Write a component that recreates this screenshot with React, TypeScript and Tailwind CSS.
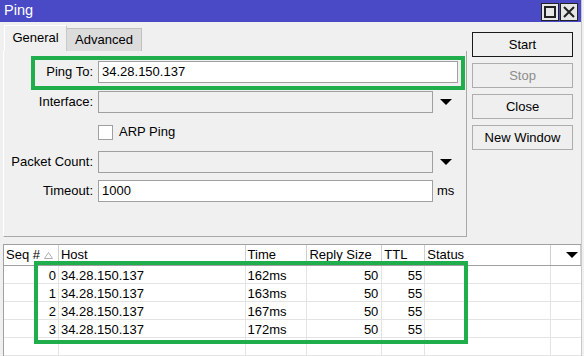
import { ReactNode } from "react";

const rows = [
  { seq: 0, host: "34.28.150.137", time: "162ms", size: 50, ttl: 55 },
  { seq: 1, host: "34.28.150.137", time: "163ms", size: 50, ttl: 55 },
  { seq: 2, host: "34.28.150.137", time: "167ms", size: 50, ttl: 55 },
  { seq: 3, host: "34.28.150.137", time: "172ms", size: 50, ttl: 55 },
];

// column widths (px)
const cols = [55, 187, 62, 75, 43, 126, 30];

function Caret() {
  return (
    <svg width="12" height="7" viewBox="0 0 12 7" className="shrink-0">
      <path d="M0 0 H12 L6 6 Z" fill="#000" />
    </svg>
  );
}

function Row({ label, children }: { label: string; children: ReactNode }) {
  return (
    <div className="flex h-[22px] items-center">
      <div className="w-[90px] pr-[1px] text-right whitespace-nowrap">{label}</div>
      <div className="ml-[4px] flex flex-1 items-center">{children}</div>
    </div>
  );
}

function Btn({ children, primary, disabled }: { children: ReactNode; primary?: boolean; disabled?: boolean }) {
  return (
    <div
      className={[
        "flex h-[25px] w-[101px] items-center justify-center bg-[#efefef] border",
        primary ? "border-[#1a1a1a]" : "border-[#adadad]",
        disabled ? "text-[#8c8c8c]" : "text-black",
      ].join(" ")}
    >
      {children}
    </div>
  );
}

export default function App() {
  return (
    <div
      className="relative h-[356px] w-[584px] overflow-hidden bg-[#f0f0f0] text-[13px] text-black"
      style={{ fontFamily: "'Liberation Sans', Arial, sans-serif" }}
    >
      <div className="flex h-full w-[582px] flex-col border-r border-[#c8c8c8]">
        {/* title bar */}
        <div className="flex h-[23px] items-center justify-between bg-[#4a4ac7] pl-[4px] pr-[3px]">
          <span className="text-[14.5px] text-white">Ping</span>
          <div className="flex gap-[1px] pt-[1px]">
            <div className="flex h-[18px] w-[18px] items-center justify-center border border-[#222] bg-[#e6e6e6]">
              <div className="h-[12px] w-[12px] border-2 border-[#222]" />
            </div>
            <div className="flex h-[18px] w-[18px] items-center justify-center border border-[#222] bg-[#e6e6e6]">
              <svg width="12" height="12" viewBox="0 0 12 12">
                <path d="M1 1 L11 11 M11 1 L1 11" stroke="#222" strokeWidth="2" />
              </svg>
            </div>
          </div>
        </div>

        <div className="flex">
          {/* left side */}
          <div className="w-[467px] pl-[3px]">
            <div className="flex h-[29px] items-end pl-[1px]">
              <div className="flex h-[26px] w-[63px] items-center justify-center border-l border-t border-r border-white border-r-[#c8c8c8] bg-[#f0f0f0] pb-[2px]">
                General
              </div>
              <div className="flex h-[23px] w-[75px] items-center justify-center border-t border-r border-[#c0c0c0] bg-[#dcdcdc]">
                Advanced
              </div>
            </div>
            <div className="flex h-[186px] flex-col gap-[8px] border-l border-white border-r border-b border-r-[#a8a8a8] border-b-[#a8a8a8] pt-[10px]">
              <Row label="Ping To:">
                <div className="flex h-[22px] w-[360px] items-center border border-[#a0a0a0] bg-white pl-[3px]">
                  34.28.150.137
                </div>
              </Row>
              <Row label="Interface:">
                <div className="h-[22px] w-[335px] border border-[#a0a0a0] bg-[#f0f0f0]" />
                <div className="ml-[7px]">
                  <Caret />
                </div>
              </Row>
              <div className="flex h-[22px] items-center pl-[94px]">
                <div className="h-[15px] w-[15px] border border-[#a0a0a0] bg-white" />
                <span className="ml-[6px]">ARP Ping</span>
              </div>
              <Row label="Packet Count:">
                <div className="h-[22px] w-[335px] border border-[#a0a0a0] bg-[#f0f0f0]" />
                <div className="ml-[7px]">
                  <Caret />
                </div>
              </Row>
              <div className="-mt-[1px]">
                <Row label="Timeout:">
                  <div className="flex h-[22px] w-[335px] items-center border border-[#a0a0a0] bg-white pl-[3px]">
                    1000
                  </div>
                  <span className="ml-[4px]">ms</span>
                </Row>
              </div>
            </div>
          </div>

          {/* right buttons */}
          <div className="ml-[5px] flex flex-col gap-[6px] pt-[10px]">
            <Btn primary>Start</Btn>
            <Btn disabled>Stop</Btn>
            <Btn>Close</Btn>
            <Btn>New Window</Btn>
          </div>
        </div>

        {/* table */}
        <div className="ml-[3px] mt-[7px] flex-1 border-l border-t border-[#a0a0a0] bg-white">
          <div className="flex h-[21px] border-b border-[#a0a0a0]">
            {["Seq #", "Host", "Time", "Reply Size", "TTL", "Status", ""].map((h, i) => (
              <div
                key={i}
                className="flex items-center border-r border-[#d0d0d0] pl-[2px] whitespace-nowrap"
                style={{ width: cols[i] }}
              >
                {h}
                {i === 0 && (
                  <svg width="9" height="7" viewBox="0 0 9 7" className="ml-[4px]">
                    <path d="M0.5 6.5 L4.5 0.5 L8.5 6.5 Z" fill="none" stroke="#b0b0b0" />
                  </svg>
                )}
                {i === 6 && (
                  <div className="ml-auto mr-[2px]">
                    <Caret />
                  </div>
                )}
              </div>
            ))}
          </div>
          {rows.map((r) => (
            <div key={r.seq} className="flex h-[18px] border-b border-[#e4e4e4]">
              <div className="border-r border-[#e4e4e4] pr-[2px] text-right" style={{ width: cols[0] }}>
                {r.seq}
              </div>
              <div className="border-r border-[#e4e4e4] pl-[2px]" style={{ width: cols[1] }}>
                {r.host}
              </div>
              <div className="border-r border-[#e4e4e4] pl-[2px]" style={{ width: cols[2] }}>
                {r.time}
              </div>
              <div className="border-r border-[#e4e4e4] pr-[3px] text-right" style={{ width: cols[3] }}>
                {r.size}
              </div>
              <div className="border-r border-[#e4e4e4] pr-[2px] text-right" style={{ width: cols[4] }}>
                {r.ttl}
              </div>
              <div className="border-r border-[#e4e4e4]" style={{ width: cols[5] }} />
              <div style={{ width: cols[6] }} />
            </div>
          ))}
          <div className="flex h-[18px] border-b border-[#e4e4e4]">
            {cols.map((w, i) => (
              <div key={i} className={i < 6 ? "border-r border-[#e4e4e4]" : ""} style={{ width: w }} />
            ))}
          </div>
        </div>
      </div>

      {/* annotation boxes */}
      <div className="absolute left-[31px] top-[56px] h-[34px] w-[434px] border-4 border-[#1fae4b]" />
      <div className="absolute left-[34px] top-[261px] h-[83px] w-[434px] border-4 border-[#1fae4b]" />
    </div>
  );
}
